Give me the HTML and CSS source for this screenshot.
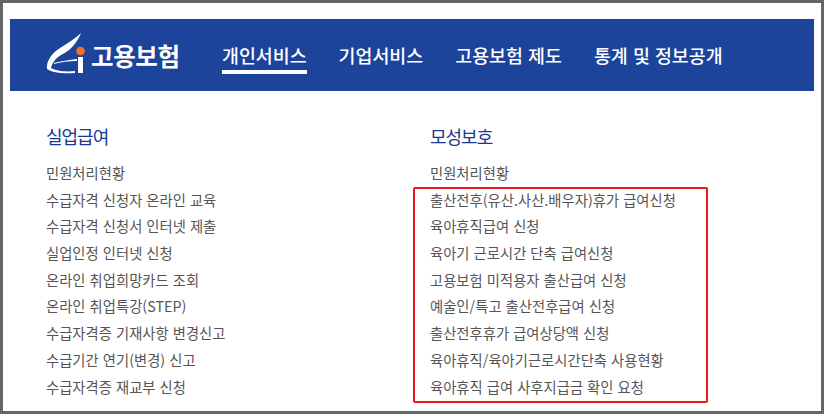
FILE: index.html
```html
<!DOCTYPE html>
<html lang="ko">
<head>
  <meta charset="UTF-8">
  <title>고용보험</title>
  <link rel="stylesheet" href="styles.css">
</head>
<body>
  <div class="frame">
    <div class="header">
      <div class="logo">
        <svg class="logo-mark" width="40" height="42" viewBox="0 0 40 42">
          <path d="M35 0 C31 10 24 18 15 22 C10 25 6 30 5 35 C10 38 20 39 29 38 L29 40 C18 41 7 40 1 36 C0 28 6 20 14 15 C22 10 30 5 35 0 Z" fill="#fff"/>
          <path d="M8 30 C15 28 23 27 31 26 L31 28 C23 28 15 29 8 31 Z" fill="#fff"/>
          <rect x="32" y="24" width="5" height="16" fill="#fff"/>
          <circle cx="34.5" cy="18" r="4.3" fill="#f26f2c"/>
        </svg>
        <span class="logo-text">고용보험</span>
      </div>
      <div class="nav">
        <a class="nav-item active">개인서비스</a>
        <a class="nav-item">기업서비스</a>
        <a class="nav-item">고용보험 제도</a>
        <a class="nav-item">통계 및 정보공개</a>
      </div>
    </div>
    <div class="columns">
      <div class="col">
        <h3>실업급여</h3>
        <ul>
          <li>민원처리현황</li>
          <li>수급자격 신청자 온라인 교육</li>
          <li>수급자격 신청서 인터넷 제출</li>
          <li>실업인정 인터넷 신청</li>
          <li>온라인 취업희망카드 조회</li>
          <li>온라인 취업특강(STEP)</li>
          <li>수급자격증 기재사항 변경신고</li>
          <li>수급기간 연기(변경) 신고</li>
          <li>수급자격증 재교부 신청</li>
        </ul>
      </div>
      <div class="col">
        <h3>모성보호</h3>
        <ul>
          <li>민원처리현황</li>
          <li>출산전후(유산.사산.배우자)휴가 급여신청</li>
          <li>육아휴직급여 신청</li>
          <li>육아기 근로시간 단축 급여신청</li>
          <li>고용보험 미적용자 출산급여 신청</li>
          <li>예술인/특고 출산전후급여 신청</li>
          <li>출산전후휴가 급여상당액 신청</li>
          <li>육아휴직/육아기근로시간단축 사용현황</li>
          <li>육아휴직 급여 사후지급금 확인 요청</li>
        </ul>
      </div>
    </div>
    <div class="highlight"></div>
  </div>
</body>
</html>
```

FILE: styles.css
```css
* {
  box-sizing: border-box;
}

html, body {
  margin: 0;
  padding: 0;
}

body {
  width: 824px;
  height: 414px;
  overflow: hidden;
  background: #fff;
  font-family: "Noto Sans CJK KR", "Noto Sans", sans-serif;
}

.frame {
  position: relative;
  width: 824px;
  height: 414px;
  padding: 16px 7px 0;
  border: 3px solid #666;
  background: #fff;
  overflow: hidden;
}

.header {
  display: flex;
  align-items: center;
  height: 72px;
  padding-left: 36px;
  background: #1c449b;
  color: #fff;
}

.logo {
  display: flex;
  align-items: center;
  width: 176px;
}

.logo-mark {
  margin-top: -3px;
}

.logo-text {
  margin-left: 5px;
  font-size: 24.5px;
  font-weight: 700;
  letter-spacing: -0.4px;
}

.nav {
  display: flex;
  gap: 32px;
}

.nav-item {
  position: relative;
  font-size: 18.4px;
  font-weight: 500;
  line-height: 26px;
}

.nav-item.active::after {
  content: "";
  position: absolute;
  left: 0;
  right: 0;
  bottom: -6px;
  height: 4px;
  background: #fff;
}

.columns {
  display: flex;
  padding: 30px 0 0 36px;
}

.col {
  width: 385px;
}

.col h3 {
  margin: 0 0 9px;
  font-size: 18px;
  font-weight: 400;
  line-height: 30px;
  letter-spacing: -1px;
  color: #17398f;
}

.col ul {
  margin: 0;
  padding: 0;
  list-style: none;
}

.col li {
  height: 26.7px;
  font-size: 14.3px;
  line-height: 26.7px;
  letter-spacing: 0.03px;
  color: #555;
}

.highlight {
  position: absolute;
  left: 410px;
  top: 184px;
  width: 295px;
  height: 216px;
  border: 2px solid #f0141e;
  border-radius: 2px;
}
```
